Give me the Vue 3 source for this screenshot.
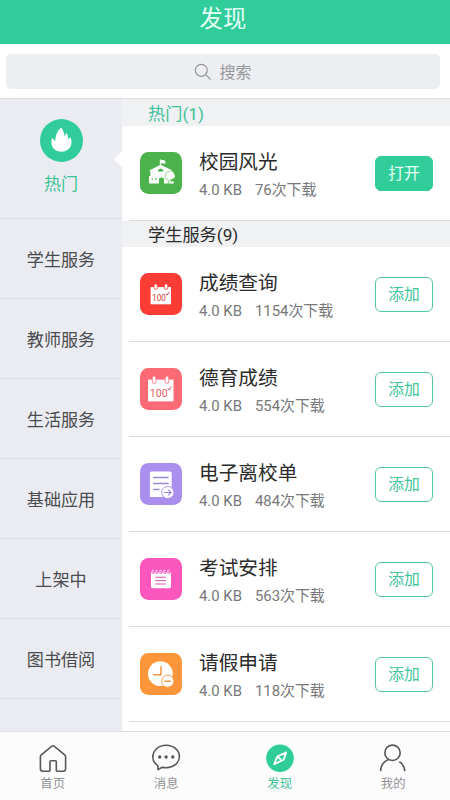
<script setup>
const categories = ['学生服务', '教师服务', '生活服务', '基础应用', '上架中', '图书借阅']

const groups = [
  {
    title: '热门(1)',
    hot: true,
    apps: [{ name: '校园风光', count: '76', icon: 'school', open: true }],
  },
  {
    title: '学生服务(9)',
    hot: false,
    apps: [
      { name: '成绩查询', count: '1154', icon: 'score' },
      { name: '德育成绩', count: '554', icon: 'moral' },
      { name: '电子离校单', count: '484', icon: 'leave' },
      { name: '考试安排', count: '563', icon: 'exam' },
      { name: '请假申请', count: '118', icon: 'absence' },
    ],
  },
]
</script>

<template>
  <div class="page">
    <header class="header">发现</header>

    <div class="search-bar">
      <div class="search-box">
        <svg class="search-icon" viewBox="0 0 18 18" width="18" height="18">
          <circle cx="7.3" cy="7.3" r="6" />
          <path d="M11.7 11.7L16.5 16.5" />
        </svg>
        <span>搜索</span>
      </div>
    </div>

    <div class="body">
      <nav class="sidebar">
        <div class="cat cat-hot">
          <svg viewBox="0 0 42 42" width="43" height="43">
            <circle cx="21" cy="21" r="21" fill="#30cd9b" />
            <path
              d="M20.9 8.4C22.4 11.2 23.8 13.6 24 17.2C24.8 16.2 25.3 15 25.6 13.4C27 15.4 27.6 17.4 27.5 19.8C28.4 19.3 29 18.6 29.4 17.7C30.8 20 31.2 22.8 30.4 25.4C29.2 29.3 25.7 31.9 21 31.9C16.3 31.9 12.7 29.6 11.5 25.7C10.8 23.2 11 20.7 11.9 18.2C12.7 19.6 13.5 20.6 15 21.2C15 16.4 16.9 11.3 20.9 8.4Z"
              fill="#fff"
            />
          </svg>
          <span>热门</span>
          <i class="pointer"></i>
        </div>
        <div v-for="c in categories" :key="c" class="cat">{{ c }}</div>
      </nav>

      <main class="list">
        <section v-for="g in groups" :key="g.title">
          <h2 class="group-title" :class="{ hot: g.hot }">{{ g.title }}</h2>
          <article v-for="app in g.apps" :key="app.name" class="row">
            <svg class="app-icon" viewBox="0 0 42 42" width="42" height="42">
              <template v-if="app.icon === 'school'">
                <rect width="42" height="42" rx="8.5" fill="#4bb24c" />
                <path d="M20.3 7.4V15" stroke="#fff" stroke-width="1" />
                <path d="M20.5 7.4C22 8.3 23.2 7.5 25.4 9V12C23.4 10.8 22 12 20.5 11.2Z" fill="#fff" />
                <path d="M9.6 18.2L20.6 12.8L32 18.2V22H31V31.4H24V26.5Q21.5 24.5 19 26.5V31.4H9V24H10.4V20Z" fill="#fff" />
                <path d="M18 19.6V17.6H19.3Q20.6 15.6 22 17.6H23.3V19.6Z" fill="#4bb24c" />
                <path d="M11.6 26.4H13.2V27.8H11.6ZM15.2 26.4H16.8V27.8H15.2Z" fill="#4bb24c" />
                <path
                  d="M28.2 27.6C25.4 27.4 24.4 24.8 25.7 23.3C25.5 20.8 27.2 19.3 29.4 19.3C31.8 18.1 34.4 19.8 34.2 21.9C36 23.4 35.2 26.2 33 26.5C32.4 27.8 31 28 30 27.6V31.4H28.2Z"
                  fill="#fff" stroke="#4bb24c" stroke-width=".6"
                />
                <path d="M30.2 31.4V29L31.4 29.9L32.4 28.7L33.8 30V31.4Z" fill="#fff" />
              </template>
              <template v-else-if="app.icon === 'score'">
                <rect width="42" height="42" rx="8.5" fill="#fb3c35" />
                <path d="M10.6 14H31V31.3H10.6Z" fill="#fff" />
                <rect x="14" y="10.8" width="3.4" height="5.6" rx="1.7" fill="#fff" stroke="#fb3c35" stroke-width=".8" />
                <rect x="24.4" y="10.8" width="3.4" height="5.6" rx="1.7" fill="#fff" stroke="#fb3c35" stroke-width=".8" />
                <text x="12" y="27.6" font-size="9" textLength="14" lengthAdjust="spacingAndGlyphs" fill="#df3932">100</text>
                <path d="M26.2 20.8L27.2 22L29.2 19.2" fill="none" stroke="#df3932" stroke-width="1" />
              </template>
              <template v-else-if="app.icon === 'moral'">
                <rect width="42" height="42" rx="8.5" fill="#fc6a76" />
                <path d="M8 11.6H33.5V33.4H8Z" fill="#fff" />
                <rect x="12.3" y="8" width="3.6" height="7.4" rx="1.8" fill="#fff" stroke="#fc6a76" stroke-width=".8" />
                <rect x="25.2" y="8" width="3.6" height="7.4" rx="1.8" fill="#fff" stroke="#fc6a76" stroke-width=".8" />
                <text x="9.8" y="28.8" font-size="11.6" textLength="17.8" lengthAdjust="spacingAndGlyphs" fill="#e25c66">100</text>
                <path d="M27.9 20.5L29 22L31.3 18.7" fill="none" stroke="#e25c66" stroke-width="1" />
              </template>
              <template v-else-if="app.icon === 'leave'">
                <rect width="42" height="42" rx="8.5" fill="#aa8fef" />
                <path d="M11.8 8.4H29.8Q31.7 8.4 31.7 10.2V33.9H9.9V10.2Q9.9 8.4 11.8 8.4Z" fill="#fff" />
                <path d="M13.2 14.6H28.6M13.2 20.6H28.6M13.2 26.4H19.6" stroke="#9c86d8" stroke-width="1.5" />
                <circle cx="27.8" cy="29.5" r="6.1" fill="#fff" stroke="#a48bea" stroke-width=".9" />
                <path d="M24 29.5H31M28.2 26.6L31.2 29.5L28.2 32.4" fill="none" stroke="#9b83df" stroke-width="1.1" />
              </template>
              <template v-else-if="app.icon === 'exam'">
                <rect width="42" height="42" rx="8.5" fill="#fb57bd" />
                <path d="M11 14.2H31V28.5Q31 30.2 29.4 30.2H12.6Q11 30.2 11 28.5Z" fill="#fff" />
                <g v-for="n in 5" :key="n" fill="none">
                  <circle :cx="9.2 + n * 3.9" cy="14.4" r="1.4" fill="#fb57bd" />
                  <path :d="`M${9.2 + n * 3.9} 14.8L${7.9 + n * 3.9} 13Q${8.5 + n * 3.9} 11.6 ${9.9 + n * 3.9} 12.5`" stroke="#fff" stroke-width=".9" />
                </g>
                <path d="M15.3 19.2H26M15.3 22.6H26M15.3 26H26" stroke="#dd56ad" stroke-width="1" />
              </template>
              <template v-else>
                <rect width="42" height="42" rx="8.5" fill="#fd963b" />
                <circle cx="20.4" cy="20.7" r="12.4" fill="#fff" />
                <path d="M21 13.2V21.7H13.2" fill="none" stroke="#ee943f" stroke-width="1.5" />
                <circle cx="27.7" cy="28.2" r="6.1" fill="#fff" stroke="#f6933b" stroke-width=".9" />
                <path d="M24.3 28.2H31" stroke="#ee943f" stroke-width="1.4" />
              </template>
            </svg>
            <div class="info">
              <div class="name">{{ app.name }}</div>
              <div class="meta"><span>4.0 KB</span><span>{{ app.count }}次下载</span></div>
            </div>
            <button class="action" :class="{ open: app.open }">{{ app.open ? '打开' : '添加' }}</button>
          </article>
        </section>
      </main>
    </div>

    <footer class="tabs">
      <div class="tab">
        <svg viewBox="0 0 30 30" width="30" height="30">
          <path d="M2.4 12.7Q2.4 11.6 3.3 10.9L13.6 2.3Q15 1.2 16.4 2.3L26.7 10.9Q27.6 11.6 27.6 12.7V24.8Q27.6 27.2 25.2 27.2H19.2Q18.3 27.2 18.3 26.3V17.6Q18.3 16.7 17.4 16.7H12.9Q12 16.7 12 17.6V26.3Q12 27.2 11.1 27.2H4.8Q2.4 27.2 2.4 24.8Z" />
        </svg>
        <span>首页</span>
      </div>
      <div class="tab">
        <svg viewBox="0 0 30 30" width="30" height="30">
          <path d="M6.8 21.6C3.7 19.6 1.8 16.6 1.8 13C1.8 6.6 7.4 1.3 15.1 1.3C22.8 1.3 28.4 6.4 28.4 12.6C28.4 18.8 22.8 23.7 15.1 23.7C13.6 23.7 12.4 23.6 11.2 23.2L7 25.6Z" />
          <g class="dots"><circle cx="8.7" cy="13" r="1.7" /><circle cx="15.1" cy="13" r="1.7" /><circle cx="21.8" cy="13" r="1.7" /></g>
        </svg>
        <span>消息</span>
      </div>
      <div class="tab active">
        <svg viewBox="0 0 30 30" width="30" height="30">
          <circle cx="15" cy="14.3" r="13.8" class="disc" />
          <path class="needle" d="M21.2 8.4L18.6 15.8L9.2 20.1L12.3 12.6Z" />
          <path class="needle-tail" d="M12.8 13.2L16.4 15.8" />
        </svg>
        <span>发现</span>
      </div>
      <div class="tab">
        <svg viewBox="0 0 30 30" width="30" height="30">
          <circle cx="14.5" cy="8.8" r="7.7" />
          <path d="M10.5 15.5C5.7 17.5 2.8 21.7 2.6 27.2M21.3 17.8C24.5 19.7 26.5 23 26.8 27.2" />
        </svg>
        <span>我的</span>
      </div>
    </footer>
  </div>
</template>

<style>
body {
  margin: 0;
  background: #fff;
}
</style>

<style scoped>
.page {
  display: flex;
  flex-direction: column;
  width: 450px;
  height: 800px;
  overflow: hidden;
  background: #fff;
  font-family: Roboto, 'Noto Sans CJK SC', sans-serif;
  color: #2b2b2b;
}
.header {
  flex: none;
  box-sizing: border-box;
  height: 44px;
  line-height: 38px;
  text-align: center;
  text-indent: -4px;
  font-size: 23.4px;
  color: #e6fff6;
  background: #30cd9b;
}
.search-bar {
  flex: none;
  box-sizing: border-box;
  height: 55px;
  padding: 10px 10px 9px 6px;
  border-bottom: 1px solid #dcdddf;
}
.search-box {
  display: flex;
  align-items: center;
  justify-content: center;
  gap: 7px;
  height: 35px;
  border-radius: 5px;
  background: #edeef2;
  font-size: 16px;
  line-height: 35px;
  color: #96979a;
}
.search-box span {
  padding-top: 2px;
}
.search-icon {
  fill: none;
  stroke: #96979a;
  stroke-width: 1.2;
}
.body {
  display: flex;
  flex: 1;
  min-height: 0;
}
.sidebar {
  flex: none;
  width: 122px;
  overflow: hidden;
  background: #ebecf1;
}
.cat {
  box-sizing: border-box;
  height: 80px;
  line-height: 82px;
  border-bottom: 1px solid #dcdde2;
  text-align: center;
  font-size: 17.1px;
  color: #4a4b4e;
}
.cat-hot {
  position: relative;
  display: flex;
  flex-direction: column;
  align-items: center;
  height: 120px;
  padding-top: 20px;
  line-height: 24px;
  color: #3cc299;
}
.cat-hot span {
  margin-top: 10px;
}
.pointer {
  position: absolute;
  right: 0;
  top: 52px;
  border: solid transparent;
  border-width: 8px 8px 8px 0;
  border-right-color: #fff;
}
.list {
  flex: 1;
  overflow: hidden;
}
.group-title {
  margin: 0;
  height: 26px;
  padding-left: 26px;
  line-height: 29px;
  font-size: 17.2px;
  font-weight: 400;
  background: #f0f1f3;
}
.group-title.hot {
  height: 27px;
  line-height: 30px;
  color: #3cc299;
}
.row {
  box-sizing: border-box;
  display: flex;
  align-items: flex-start;
  height: 95px;
  margin-left: 7px;
  padding: 26px 17px 0 11px;
  border-bottom: 1px solid #dcdcde;
}
.app-icon {
  flex: none;
}
.info {
  flex: 1;
  margin: -3px 0 0 17px;
}
.name {
  font-size: 19.7px;
  line-height: 28px;
  white-space: nowrap;
}
.meta {
  display: flex;
  gap: 13px;
  margin-top: 1px;
  font-size: 14.9px;
  line-height: 24px;
  color: #77787b;
}
.action {
  flex: none;
  box-sizing: border-box;
  width: 58px;
  height: 35px;
  margin-top: 4px;
  padding: 1px 0 0;
  border: 1px solid #55c6a4;
  border-radius: 6px;
  background: #fff;
  font: inherit;
  font-size: 15.8px;
  line-height: 32px;
  color: #3fc49b;
}
.action.open {
  border-color: #30cd9b;
  background: #30cd9b;
  color: #e6fff6;
}
.tabs {
  flex: none;
  box-sizing: border-box;
  display: flex;
  height: 69px;
  border-top: 1px solid #dedee0;
  background: #fcfcfc;
}
.tab {
  flex: none;
  width: 113.5px;
  display: flex;
  flex-direction: column;
  align-items: center;
  padding-top: 12px;
  font-size: 12.4px;
  line-height: 20px;
  color: #929395;
}
.tab:first-child {
  margin-left: -4px;
}
.tab svg {
  flex: none;
  fill: none;
  stroke: #57585b;
  stroke-width: 1.6;
  stroke-linejoin: round;
}
.tab .dots {
  fill: #57585b;
  stroke: none;
}
.tab .disc {
  fill: #30cd9b;
  stroke: none;
}
.tab .needle,
.tab .needle-tail {
  stroke: #fff;
  stroke-width: 1.8;
}
.tab.active {
  color: #3cc299;
}
</style>
